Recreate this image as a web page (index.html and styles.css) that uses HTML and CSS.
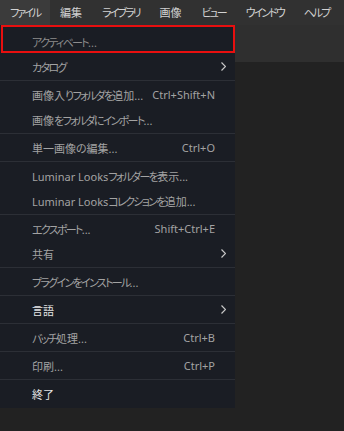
FILE: index.html
```html
<!DOCTYPE html>
<html lang="ja">
  <head>
    <meta charset="UTF-8" />
    <meta name="viewport" content="width=device-width, initial-scale=1.0" />
    <title>Luminar</title>
    <link rel="stylesheet" href="styles.css">
  </head>
  <body>
    <div class="menubar">
      <span class="top active"><span class="k">ファイル</span></span>
      <span class="top">編集</span>
      <span class="top"><span class="k">ライブラリ</span></span>
      <span class="top">画像</span>
      <span class="top"><span class="k">ビュー</span></span>
      <span class="top"><span class="k">ウインドウ</span></span>
      <span class="top"><span class="k">ヘルプ</span></span>
    </div>
    <div class="workspace">
      <div class="menu">
        <div class="mark"></div>
        <div class="item dim"><span><span class="k">アクティベート</span>...</span></div>
        <div class="item"><span class="k">カタログ</span><svg class="arrow" viewBox="0 0 5 9"><path d="M0.5 0.5 L4.5 4.5 L0.5 8.5"/></svg></div>
        <div class="sep"></div>
        <div class="item"><span>画像入<span class="k">りフォルダを</span>追加...</span><span class="key">Ctrl+Shift+N</span></div>
        <div class="item"><span>画像<span class="k">をフォルダにインポート</span>...</span></div>
        <div class="sep"></div>
        <div class="item"><span>単一画像の編集...</span><span class="key">Ctrl+O</span></div>
        <div class="sep"></div>
        <div class="item"><span>Luminar Looks<span class="k">フォルダーを</span>表示...</span></div>
        <div class="item"><span>Luminar Looks<span class="k">コレクションを</span>追加...</span></div>
        <div class="sep"></div>
        <div class="item"><span><span class="k">エクスポート</span>...</span><span class="key">Shift+Ctrl+E</span></div>
        <div class="item"><span>共有</span><svg class="arrow" viewBox="0 0 5 9"><path d="M0.5 0.5 L4.5 4.5 L0.5 8.5"/></svg></div>
        <div class="sep"></div>
        <div class="item"><span><span class="k">プラグインをインストール</span>...</span></div>
        <div class="sep"></div>
        <div class="item bright"><span>言語</span><svg class="arrow" viewBox="0 0 5 9"><path d="M0.5 0.5 L4.5 4.5 L0.5 8.5"/></svg></div>
        <div class="sep"></div>
        <div class="item"><span><span class="k">バッチ</span>処理...</span><span class="key">Ctrl+B</span></div>
        <div class="sep"></div>
        <div class="item"><span>印刷...</span><span class="key">Ctrl+P</span></div>
        <div class="sep"></div>
        <div class="item bright"><span>終了</span></div>
      </div>
      <div class="canvas">
        <div class="toolbar"></div>
      </div>
    </div>
  </body>
</html>
```

FILE: styles.css
```css
body {
  margin: 0;
  background-color: #222222;
  font-family: "Noto Sans", "Noto Sans CJK JP", sans-serif;
  font-feature-settings: "palt";
  overflow: hidden;
}
/* kana runs are narrower in the original UI font */
.k {
  letter-spacing: -1.7px;
}
.menubar {
  display: flex;
  height: 25px;
  background-color: #313131;
}
.top {
  flex-shrink: 0;
  padding: 0 10px;
  line-height: 25px;
  font-size: 11px;
  color: #d2d2d2;
  white-space: nowrap;
}
.top .k {
  letter-spacing: -2px;
}
.top.active {
  background-color: #3b3b3b;
}
.workspace {
  display: flex;
  align-items: flex-start;
}
.menu {
  position: relative;
  width: 235px;
  padding: 4px 0 2px;
  background-color: #1a1d24;
}
.mark {
  position: absolute;
  left: 1px;
  top: 0;
  width: 230px;
  height: 24px;
  border: 2px solid #e80f0f;
}
.item {
  display: flex;
  align-items: center;
  height: 25px;
  padding: 0 20px 0 32px;
  font-size: 11px;
  color: #a3a3a3;
  white-space: nowrap;
}
.item .key {
  margin-left: auto;
}
.item.dim {
  color: #8c8c8c;
}
.item.bright {
  color: #e4e4e4;
}
.arrow {
  width: 5px;
  height: 9px;
  margin-left: auto;
  margin-right: -11px;
  fill: none;
  stroke: #c8c8c8;
  stroke-width: 1.2;
}
.sep {
  height: 1px;
  margin: 1px 0;
  background-color: #2c2f36;
}
.canvas {
  flex: 1;
}
.toolbar {
  height: 37px;
  background-color: #2f2f2f;
}
```
